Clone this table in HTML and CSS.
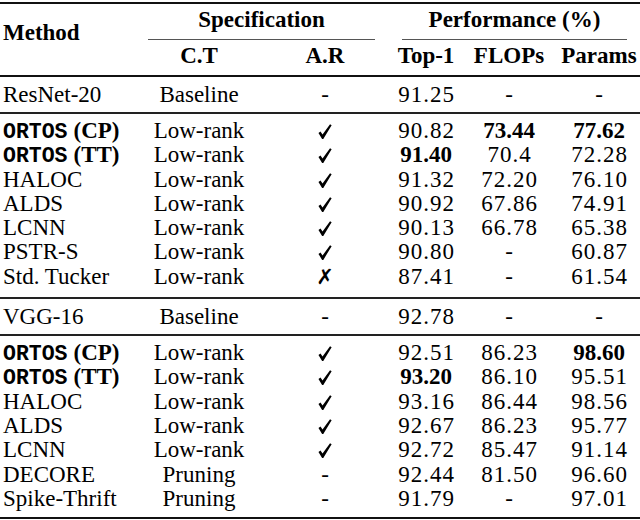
FILE: index.html
```html
<!DOCTYPE html>
<html lang="en">
<head>
<meta charset="utf-8">
<title>Compression results</title>
<link rel="stylesheet" href="styles.css">
</head>
<body>
<svg width="0" height="0" class="defs" aria-hidden="true">
  <defs>
    <symbol id="chk" viewBox="0 0 13 14">
      <path d="M0.4 8.3 L2.3 7.0 L4.2 9.9 L11.2 0.2 L12.7 1.1 L4.9 13.9 L3.8 13.9 Z" fill="#000"/>
    </symbol>
  </defs>
</svg>
<div class="table">
  <div class="head">
    <div class="h-method">Method</div>
    <div class="h-group spec">Specification</div>
    <div class="h-group perf">Performance (%)</div>
    <div class="h-sub">C.T</div>
    <div class="h-sub">A.R</div>
    <div class="h-sub">Top-1</div>
    <div class="h-sub">FLOPs</div>
    <div class="h-sub">Params</div>
  </div>

  <div class="section base">
    <div class="row"><div class="m">ResNet-20</div><div class="c">Baseline</div><div class="c">-</div><div class="c n">91.25</div><div class="c">-</div><div class="c">-</div></div>
  </div>

  <div class="section body">
    <div class="row"><div class="m"><span class="ortos">ORTOS</span><b class="tag">(CP)</b></div><div class="c">Low-rank</div><div class="c"><svg class="ck"><use href="#chk"/></svg></div><div class="c n">90.82</div><div class="c"><b>73.44</b></div><div class="c"><b>77.62</b></div></div>
    <div class="row"><div class="m"><span class="ortos">ORTOS</span><b class="tag">(TT)</b></div><div class="c">Low-rank</div><div class="c"><svg class="ck"><use href="#chk"/></svg></div><div class="c"><b>91.40</b></div><div class="c n">70.4</div><div class="c n">72.28</div></div>
    <div class="row"><div class="m">HALOC</div><div class="c">Low-rank</div><div class="c"><svg class="ck"><use href="#chk"/></svg></div><div class="c n">91.32</div><div class="c n">72.20</div><div class="c n">76.10</div></div>
    <div class="row"><div class="m">ALDS</div><div class="c">Low-rank</div><div class="c"><svg class="ck"><use href="#chk"/></svg></div><div class="c n">90.92</div><div class="c n">67.86</div><div class="c n">74.91</div></div>
    <div class="row"><div class="m">LCNN</div><div class="c">Low-rank</div><div class="c"><svg class="ck"><use href="#chk"/></svg></div><div class="c n">90.13</div><div class="c n">66.78</div><div class="c n">65.38</div></div>
    <div class="row"><div class="m">PSTR-S</div><div class="c">Low-rank</div><div class="c"><svg class="ck"><use href="#chk"/></svg></div><div class="c n">90.80</div><div class="c">-</div><div class="c n">60.87</div></div>
    <div class="row"><div class="m">Std. Tucker</div><div class="c">Low-rank</div><div class="c"><span class="x">✗</span></div><div class="c n">87.41</div><div class="c">-</div><div class="c n">61.54</div></div>
  </div>

  <div class="section base">
    <div class="row"><div class="m">VGG-16</div><div class="c">Baseline</div><div class="c">-</div><div class="c n">92.78</div><div class="c">-</div><div class="c">-</div></div>
  </div>

  <div class="section body last">
    <div class="row"><div class="m"><span class="ortos">ORTOS</span><b class="tag">(CP)</b></div><div class="c">Low-rank</div><div class="c"><svg class="ck"><use href="#chk"/></svg></div><div class="c n">92.51</div><div class="c n">86.23</div><div class="c"><b>98.60</b></div></div>
    <div class="row"><div class="m"><span class="ortos">ORTOS</span><b class="tag">(TT)</b></div><div class="c">Low-rank</div><div class="c"><svg class="ck"><use href="#chk"/></svg></div><div class="c"><b>93.20</b></div><div class="c n">86.10</div><div class="c n">95.51</div></div>
    <div class="row"><div class="m">HALOC</div><div class="c">Low-rank</div><div class="c"><svg class="ck"><use href="#chk"/></svg></div><div class="c n">93.16</div><div class="c n">86.44</div><div class="c n">98.56</div></div>
    <div class="row"><div class="m">ALDS</div><div class="c">Low-rank</div><div class="c"><svg class="ck"><use href="#chk"/></svg></div><div class="c n">92.67</div><div class="c n">86.23</div><div class="c n">95.77</div></div>
    <div class="row"><div class="m">LCNN</div><div class="c">Low-rank</div><div class="c"><svg class="ck"><use href="#chk"/></svg></div><div class="c n">92.72</div><div class="c n">85.47</div><div class="c n">91.14</div></div>
    <div class="row"><div class="m">DECORE</div><div class="c">Pruning</div><div class="c">-</div><div class="c n">92.44</div><div class="c n">81.50</div><div class="c n">96.60</div></div>
    <div class="row"><div class="m">Spike-Thrift</div><div class="c">Pruning</div><div class="c">-</div><div class="c n">91.79</div><div class="c">-</div><div class="c n">97.01</div></div>
  </div>
</div>
</body>
</html>
```

FILE: styles.css
```css
html, body {
  margin: 0;
  padding: 0;
  background: #fff;
}

body {
  font-family: "Liberation Serif", "Times New Roman", serif;
  font-size: 23px;
  color: #000;
}

.defs {
  position: absolute;
  width: 0;
  height: 0;
  overflow: hidden;
}

.table {
  margin-top: 2px;
  width: 640px;
  border-top: 2px solid #111;
  border-bottom: 2px solid #111;
}

.head,
.row {
  display: grid;
  grid-template-columns: 140px 118px 134px 68px 98px 82px;
}

.head {
  grid-template-rows: auto auto;
  border-bottom: 2px solid #111;
  font-weight: bold;
  line-height: 24px;
}

.h-method {
  grid-column: 1;
  grid-row: 1 / 3;
  padding: 17px 0 0 3px;
}

.h-group {
  grid-row: 1;
  text-align: center;
  padding: 4px 0 7px;
  border-bottom: 1px solid #555;
}

.spec {
  grid-column: 2 / 4;
  margin: 0 17px 0 8px;
}

.perf {
  grid-column: 4 / 7;
  margin: 0 13px 0 10px;
}

.h-sub {
  grid-row: 2;
  text-align: center;
  padding: 4px 0 7px;
}

.section {
  border-bottom: 2px solid #222;
}

.section.last {
  border-bottom: none;
}

.base {
  padding: 6px 0 5px;
}

.body {
  padding: 5px 0 8px;
}

.body.last {
  padding-bottom: 6px;
}

.row {
  line-height: 24.3px;
  height: 24.3px;
}

.base .row {
  line-height: 24px;
  height: 24px;
}

.m {
  padding-left: 3px;
  white-space: nowrap;
  display: flex;
  align-items: baseline;
  gap: 6px;
}

.c {
  text-align: center;
  white-space: nowrap;
}

.n {
  letter-spacing: 1px;
  padding-left: 1px;
}

.ortos {
  font-family: "Liberation Mono", "Courier New", monospace;
  font-weight: bold;
  font-size: 21.5px;
  line-height: 1;
}

.ck {
  width: 14px;
  height: 15px;
  vertical-align: -1px;
}

.x {
  font-family: "DejaVu Sans", sans-serif;
  font-weight: bold;
  font-size: 21px;
}
```
